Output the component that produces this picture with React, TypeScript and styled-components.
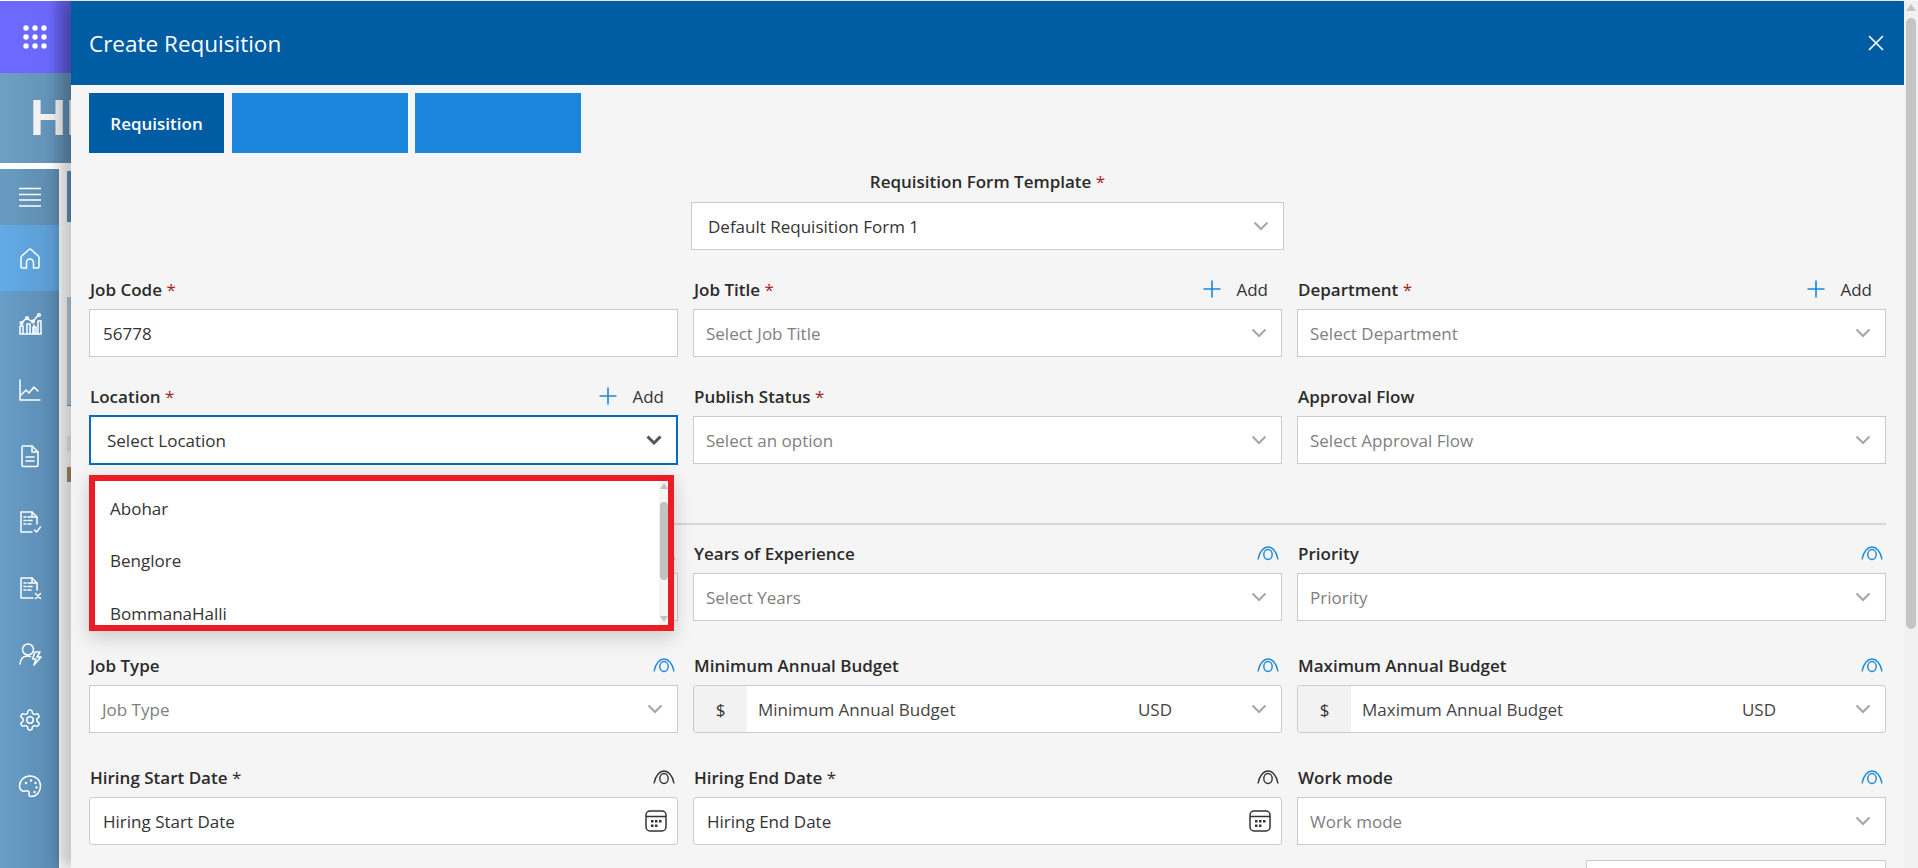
import styled, { createGlobalStyle } from 'styled-components';
import { ReactNode } from 'react';

const GlobalStyle = createGlobalStyle`
  html, body {
    margin: 0;
    padding: 0;
    height: 100%;
    overflow: hidden;
    background: #fff;
    font-family: 'Open Sans', 'Noto Sans', sans-serif;
  }
  * { box-sizing: border-box; }
`;

const Page = styled.div`
  position: relative;
  width: 1918px;
  height: 868px;
  overflow: hidden;
  padding-top: 1px;
`;

const TopBar = styled.div`
  height: 72px;
  width: 71px;
  background: linear-gradient(90deg, #6d69ff, #6c68fc 70%, #5a57d6);
  display: flex;
  align-items: center;
  justify-content: flex-end;
  padding-right: 24px;
`;

const Banner = styled.div`
  height: 90px;
  background: linear-gradient(90deg, #6ea0c4, #5f8eb3 71px);
  font-family: 'Liberation Sans', sans-serif;
  font-size: 50px;
  font-weight: 700;
  color: #f2f2f2;
  line-height: 90px;
  padding-left: 30px;
  white-space: nowrap;
`;

const Body = styled.div`
  margin-top: 6px;
  display: flex;
  height: 699px;
`;

const Sidebar = styled.nav`
  width: 59px;
  flex: none;
  background: linear-gradient(90deg, #699fca, #5a8ab0);
  color: #fff;
`;

const MenuRow = styled.div`
  height: 56px;
  display: flex;
  align-items: center;
  justify-content: center;
  background: linear-gradient(90deg, #6a9cc2, #5c8aad);
`;

const NavRow = styled.div<{ $active?: boolean }>`
  height: 66px;
  display: flex;
  align-items: center;
  justify-content: center;
  background: ${(p) => (p.$active ? 'linear-gradient(90deg, #63abe8, #5b9bd0)' : 'transparent')};
`;

const Behind = styled.div`
  flex: 1;
  background: #fff;
  padding: 2px 0 0 8px;
  display: flex;
  flex-direction: column;
`;

const BehindBar = styled.div`
  width: 40px;
  height: 51px;
  background: #5c8fbb;
`;

const BehindCard = styled.div`
  width: 40px;
  height: 109px;
  margin-top: 75px;
  background: #b9ccdc;
  border-bottom: 1px solid #5c8fbb;
`;

const BehindChip = styled.div`
  width: 40px;
  height: 15px;
  margin-top: 30px;
  background: #ececec;
`;

const BehindMark = styled.div`
  width: 40px;
  height: 15px;
  margin-top: 16px;
  background: #a58a62;
`;

const Modal = styled.section`
  position: absolute;
  top: 1px;
  left: 71px;
  width: 1847px;
  height: 867px;
  background: #f5f5f5;
  box-shadow: -12px 0 14px rgba(0, 0, 0, 0.22);
  overflow: hidden;
  display: flex;
`;

const ModalMain = styled.div`
  width: 1833px;
  flex: none;
`;

const ModalHeader = styled.header`
  height: 84px;
  background: #005ca3;
  color: #fff;
  display: flex;
  align-items: center;
  justify-content: space-between;
  padding: 0 19px 0 18px;
`;

const ModalTitle = styled.h1`
  margin: 0;
  font-size: 22.5px;
  font-weight: 400;
`;

const Close = styled.button`
  border: none;
  background: none;
  padding: 0;
  display: flex;
  color: #fff;
`;

const ScrollTrack = styled.div`
  width: 14px;
  flex: none;
  background: #f1f1f1;
  padding: 3px 2px 0;
  display: flex;
  flex-direction: column;
  align-items: center;
`;

const ScrollArrowUp = styled.div`
  width: 0;
  height: 0;
  border-left: 5px solid transparent;
  border-right: 5px solid transparent;
  border-bottom: 7px solid #c6c6c6;
`;

const ScrollThumb = styled.div`
  width: 10px;
  height: 611px;
  margin-top: 7px;
  border-radius: 5px;
  background: #c4c4c4;
`;

const Tabs = styled.div`
  display: flex;
  padding: 8px 18px 0;
`;

const Tab = styled.div<{ $active?: boolean; $width: number; $gap: number }>`
  height: 60px;
  width: ${(p) => p.$width}px;
  margin-right: ${(p) => p.$gap}px;
  background: ${(p) => (p.$active ? '#005ca3' : '#1b86db')};
  color: #fff;
  font-size: 17px;
  font-weight: 600;
  display: flex;
  align-items: center;
  justify-content: center;
`;

const Form = styled.div`
  padding: 0 18px;
`;

const TemplateBlock = styled.div`
  width: 593px;
  margin: 17px auto 0 602px;
  display: flex;
  flex-direction: column;
  align-items: center;
`;

const TemplateLabel = styled.div`
  height: 24px;
  line-height: 24px;
  margin-bottom: 8px;
  font-size: 17px;
  font-weight: 600;
  color: #2b2b2b;
`;

const Grid = styled.div<{ $top: number; $rowGap: number }>`
  display: grid;
  grid-template-columns: repeat(3, 589px);
  column-gap: 15px;
  row-gap: ${(p) => p.$rowGap}px;
  margin-top: ${(p) => p.$top}px;
`;

const Field = styled.div`
  position: relative;
`;

const FieldHead = styled.div`
  height: 24px;
  margin-bottom: 8px;
  display: flex;
  align-items: center;
  justify-content: space-between;
  padding-right: 14px;
`;

const EyeHead = styled(FieldHead)`
  padding-right: 3px;
`;

const Label = styled.label`
  font-size: 17px;
  font-weight: 600;
  color: #2b2b2b;
  padding-left: 1px;
`;

const Star = styled.span<{ $plain?: boolean }>`
  color: ${(p) => (p.$plain ? '#2b2b2b' : '#a31e22')};
  font-weight: 400;
`;

const AddLink = styled.span`
  display: flex;
  align-items: center;
  gap: 15px;
  font-size: 17px;
  color: #333;
`;

const Control = styled.div<{ $focus?: boolean; $round?: boolean }>`
  height: ${(p) => (p.$focus ? 50 : 48)}px;
  margin-top: ${(p) => (p.$focus ? -1 : 0)}px;
  background: #fff;
  border: ${(p) => (p.$focus ? '2px solid #0a6ab5' : '1px solid #cbcbcb')};
  border-radius: ${(p) => (p.$round ? 3 : 0)}px;
  display: flex;
  align-items: center;
  justify-content: space-between;
  font-size: 17px;
  overflow: hidden;
`;

const ControlText = styled.span<{ $muted?: boolean; $inset: number }>`
  padding-left: ${(p) => p.$inset}px;
  color: ${(p) => (p.$muted ? '#808080' : '#333')};
`;

const Chevron = styled.svg<{ $dark?: boolean }>`
  width: 16px;
  height: 10px;
  margin-right: 14px;
  flex: none;
  fill: none;
  stroke: ${(p) => (p.$dark ? '#555' : '#a6a6a6')};
  stroke-width: ${(p) => (p.$dark ? 3 : 2)};
`;

const Addon = styled.span`
  width: 53px;
  align-self: stretch;
  flex: none;
  background: #f2f2f2;
  color: #333;
  display: flex;
  align-items: center;
  justify-content: center;
`;

const BudgetText = styled.span`
  flex: 1;
  padding-left: 11px;
  color: #444;
`;

const Currency = styled.span`
  color: #444;
  margin-right: 79px;
`;

const Divider = styled.div`
  height: 2px;
  margin-top: 58px;
  background: #d6d6d6;
`;

const Dropdown = styled.div`
  position: absolute;
  top: 59px;
  left: 0;
  width: 585px;
  height: 156px;
  z-index: 3;
  background: #fff;
  border: 6px solid #ed1c24;
  box-shadow: 0 6px 18px rgba(0, 0, 0, 0.18);
  overflow: hidden;
  display: flex;
`;

const Options = styled.ul`
  list-style: none;
  margin: 0;
  padding: 0 0 0 15px;
  flex: 1;
  font-size: 17px;
  color: #333;
`;

const Option = styled.li`
  height: 52.5px;
  display: flex;
  align-items: center;
  position: relative;
  top: 1px;
`;

const DropScroll = styled.div`
  width: 9px;
  margin-right: 0;
  flex: none;
  display: flex;
  flex-direction: column;
  align-items: center;
  background: #f4f4f4;
`;

const DropThumb = styled.div`
  width: 8px;
  height: 78px;
  margin-top: 13px;
  border-radius: 4px;
  background: #c2c2c2;
`;

const DropArrow = styled.div<{ $down?: boolean }>`
  width: 0;
  height: 0;
  margin-top: ${(p) => (p.$down ? 'auto' : '2px')};
  margin-bottom: ${(p) => (p.$down ? '3px' : '0')};
  border-left: 4px solid transparent;
  border-right: 4px solid transparent;
  ${(p) => (p.$down ? 'border-top: 6px solid #c2c2c2;' : 'border-bottom: 6px solid #c2c2c2;')}
`;

const NextRow = styled.div`
  height: 40px;
  width: 300px;
  margin: 15px 0 0 auto;
  background: #fff;
  border: 1px solid #cbcbcb;
`;

const ChevronIcon = ({ dark }: { dark?: boolean }) => (
  <Chevron $dark={dark} viewBox="0 0 16 10">
    <path d="M1.5 1.5 8 8l6.5-6.5" />
  </Chevron>
);

const PlusIcon = () => (
  <svg width="18" height="18" viewBox="0 0 18 18" fill="none" stroke="#1b86db" strokeWidth="1.6">
    <path d="M9 0.5v17M0.5 9h17" />
  </svg>
);

const EyeIcon = ({ dark }: { dark?: boolean }) => (
  <svg width="22" height="15" viewBox="0 0 22 15" fill="none" stroke={dark ? '#333' : '#1b86db'} strokeWidth="1.4">
    <path d="M1 13.5C2.5 5 7 1 11 1s8.500 4 10 12.500" />
    <ellipse cx="11" cy="8.500" rx="4.200" ry="5" />
  </svg>
);

const CalendarIcon = () => (
  <svg width="22" height="22" viewBox="0 0 22 22" fill="none" stroke="#333" strokeWidth="1.5" style={{ marginRight: 10 }}>
    <rect x="1" y="1" width="20" height="20" rx="4" />
    <path d="M1 6.500h20" />
    <g fill="#333" stroke="none">
      <rect x="6" y="10" width="2.500" height="2.500" />
      <rect x="10" y="10" width="2.500" height="2.500" />
      <rect x="14" y="10" width="2.500" height="2.500" />
      <rect x="6" y="14.500" width="2.500" height="2.500" />
      <rect x="10" y="14.500" width="2.500" height="2.500" />
    </g>
  </svg>
);

const GridDots = () => (
  <svg width="24" height="24" viewBox="0 0 24 24" fill="#fff">
    {[3, 12, 21].flatMap((y) => [3, 12, 21].map((x) => <circle key={`${x}-${y}`} cx={x} cy={y} r="2.700" />))}
  </svg>
);

const NavSvg = ({ children }: { children: ReactNode }) => (
  <svg width="24" height="24" viewBox="0 0 24 24" fill="none" stroke="#fff" strokeWidth="1.500" strokeLinecap="round" strokeLinejoin="round">
    {children}
  </svg>
);

const navIcons: ReactNode[] = [
  <path key="h" d="M3 21V11.500a2 2 0 0 1 .7-1.500L11 3.500a1.500 1.500 0 0 1 2 0l7.300 6.500a2 2 0 0 1 .7 1.500V21a1 1 0 0 1-1 1h-4.500v-5.500a3.500 3.500 0 0 0-7 0V22H4a1 1 0 0 1-1-1z" />,
  <g key="a">
    <path d="M2 22v-8h3v8zM9 22V12h3v10zM16 22v-9h0M15 22v-7h3v7zM20 22V9h3v13zM2 22h21" />
    <path d="M3.500 11 8.500 6l6 4 5-6" />
    <circle cx="3.500" cy="11" r="1.300" />
    <circle cx="9" cy="6" r="1.300" />
    <circle cx="15" cy="9.500" r="1.300" />
    <circle cx="21" cy="3" r="1.300" />
  </g>,
  <path key="l" d="M2 2v20h20M3 17l5-5 3 3 5-6 4 4" />,
  <g key="d">
    <path d="M5 2h9l6 6v13a1.500 1.500 0 0 1-1.500 1.500h-13A1.500 1.500 0 0 1 4 21V3a1 1 0 0 1 1-1z" />
    <path d="M14 2v6h6M8 13h8M8 17h8" />
  </g>,
  <g key="c">
    <path d="M19 14V7l-5-5H3v20h11" />
    <path d="M14 2v5h5M6 7h2M10 7h3M6 10.500h2M10 10.500h4M6 14h2M10 14h3M16.500 20l2 2 4-5" />
  </g>,
  <g key="x">
    <path d="M19 14V7l-5-5H3v20h12" />
    <path d="M14 2v5h5M6 7h2M10 7h3M6 10.500h2M10 10.500h4M6 14h2M10 14h3M17.500 17.500l5 5M22.500 17.500l-5 5" />
  </g>,
  <g key="u">
    <circle cx="10" cy="7.500" r="5.500" />
    <path d="M2 22c.5-5 3.500-8 7.500-8 1 0 2 .2 3 .6M17 10h5l-3 5h4l-7 8 2-6h-3.500z" />
  </g>,
  <g key="s">
    <path d="M12.200 2h-.4a2 2 0 0 0-2 2v.2a2 2 0 0 1-1 1.700l-.4.300a2 2 0 0 1-2 0l-.2-.1a2 2 0 0 0-2.700.7l-.2.400a2 2 0 0 0 .7 2.700l.2.100a2 2 0 0 1 1 1.700v.6a2 2 0 0 1-1 1.700l-.2.100a2 2 0 0 0-.7 2.700l.2.400a2 2 0 0 0 2.700.7l.2-.1a2 2 0 0 1 2 0l.4.300a2 2 0 0 1 1 1.700v.2a2 2 0 0 0 2 2h.4a2 2 0 0 0 2-2v-.2a2 2 0 0 1 1-1.700l.4-.3a2 2 0 0 1 2 0l.2.100a2 2 0 0 0 2.700-.7l.2-.4a2 2 0 0 0-.7-2.700l-.2-.1a2 2 0 0 1-1-1.700v-.6a2 2 0 0 1 1-1.700l.2-.1a2 2 0 0 0 .7-2.700l-.2-.4a2 2 0 0 0-2.700-.7l-.2.100a2 2 0 0 1-2 0l-.4-.3a2 2 0 0 1-1-1.700V4a2 2 0 0 0-2-2z" />
    <circle cx="12" cy="12" r="3.200" />
  </g>,
  <g key="p">
    <path d="M12 2C6 2 1.500 6.500 1.500 12c0 4 3 6 6 5 2.500-.8 4.500.5 3.500 3-.5 1.500.5 2.500 2 2.500 5.500 0 9.500-4.500 9.500-10.500S18 2 12 2z" />
    <g fill="#fff" stroke="none">
      <circle cx="8" cy="9" r="1.200" />
      <circle cx="13" cy="6.500" r="1.200" />
      <circle cx="17.500" cy="9" r="1.200" />
      <circle cx="18.500" cy="13.500" r="1.200" />
      <circle cx="16.500" cy="18" r="1.200" />
    </g>
  </g>,
];

type HeadProps = { label: string; star?: 'red' | 'plain'; };

const LabelText = ({ label, star }: HeadProps) => (
  <Label>
    {label}
    {star && <Star $plain={star === 'plain'}> *</Star>}
  </Label>
);

const AddHead = (props: HeadProps) => (
  <FieldHead>
    <LabelText {...props} />
    <AddLink>
      <PlusIcon />
      Add
    </AddLink>
  </FieldHead>
);

const VisHead = ({ dark, ...props }: HeadProps & { dark?: boolean }) => (
  <EyeHead>
    <LabelText {...props} />
    <EyeIcon dark={dark} />
  </EyeHead>
);

const SelectBox = ({ text }: { text: string }) => (
  <Control>
    <ControlText $muted $inset={12}>{text}</ControlText>
    <ChevronIcon />
  </Control>
);

const BudgetBox = ({ text }: { text: string }) => (
  <Control $round>
    <Addon>$</Addon>
    <BudgetText>{text}</BudgetText>
    <Currency>USD</Currency>
    <ChevronIcon />
  </Control>
);

const DateBox = ({ text }: { text: string }) => (
  <Control $round>
    <ControlText $inset={13}>{text}</ControlText>
    <CalendarIcon />
  </Control>
);

export default function App() {
  return (
    <>
      <GlobalStyle />
      <Page>
        <TopBar>
          <GridDots />
        </TopBar>
        <Banner>HI</Banner>
        <Body>
          <Sidebar>
            <MenuRow>
              <svg width="22" height="20" viewBox="0 0 22 20" stroke="#fff" strokeWidth="1.300">
                <path d="M0 1.500h22M0 7.500h22M0 13h22M0 19h22" />
              </svg>
            </MenuRow>
            {navIcons.map((icon, i) => (
              <NavRow key={i} $active={i === 0}>
                <NavSvg>{icon}</NavSvg>
              </NavRow>
            ))}
          </Sidebar>
          <Behind>
            <BehindBar />
            <BehindCard />
            <BehindChip />
            <BehindMark />
          </Behind>
        </Body>
        <Modal>
          <ModalMain>
            <ModalHeader>
              <ModalTitle>Create Requisition</ModalTitle>
              <Close aria-label="Close">
                <svg width="18" height="18" viewBox="0 0 18 18" fill="none" stroke="#fff" strokeWidth="1.600">
                  <path d="M2 2l14 14M16 2 2 16" />
                </svg>
              </Close>
            </ModalHeader>
            <Tabs>
              <Tab $active $width={135} $gap={8}>Requisition</Tab>
              <Tab $width={176} $gap={7} />
              <Tab $width={166} $gap={0} />
            </Tabs>
            <Form>
              <TemplateBlock>
                <TemplateLabel>
                  Requisition Form Template<Star> *</Star>
                </TemplateLabel>
                <Control style={{ width: '100%' }}>
                  <ControlText $inset={16}>Default Requisition Form 1</ControlText>
                  <ChevronIcon />
                </Control>
              </TemplateBlock>
              <Grid $top={27} $rowGap={27}>
                <Field>
                  <FieldHead><LabelText label="Job Code" star="red" /></FieldHead>
                  <Control>
                    <ControlText $inset={13}>56778</ControlText>
                  </Control>
                </Field>
                <Field>
                  <AddHead label="Job Title" star="red" />
                  <SelectBox text="Select Job Title" />
                </Field>
                <Field>
                  <AddHead label="Department" star="red" />
                  <SelectBox text="Select Department" />
                </Field>
                <Field>
                  <AddHead label="Location" star="red" />
                  <Control $focus>
                    <ControlText $inset={16}>Select Location</ControlText>
                    <ChevronIcon dark />
                  </Control>
                  <Dropdown style={{ top: 91 }}>
                    <Options>
                      <Option>Abohar</Option>
                      <Option>Benglore</Option>
                      <Option>BommanaHalli</Option>
                    </Options>
                    <DropScroll>
                      <DropArrow />
                      <DropThumb />
                      <DropArrow $down />
                    </DropScroll>
                  </Dropdown>
                </Field>
                <Field>
                  <FieldHead><LabelText label="Publish Status" star="red" /></FieldHead>
                  <SelectBox text="Select an option" />
                </Field>
                <Field>
                  <FieldHead><LabelText label="Approval Flow" /></FieldHead>
                  <SelectBox text="Select Approval Flow" />
                </Field>
              </Grid>
              <Divider />
              <Grid $top={16} $rowGap={32}>
                <Field>
                  <VisHead label="Experience" />
                  <SelectBox text="" />
                </Field>
                <Field>
                  <VisHead label="Years of Experience" />
                  <SelectBox text="Select Years" />
                </Field>
                <Field>
                  <VisHead label="Priority" />
                  <SelectBox text="Priority" />
                </Field>
                <Field>
                  <VisHead label="Job Type" />
                  <SelectBox text="Job Type" />
                </Field>
                <Field>
                  <VisHead label="Minimum Annual Budget" />
                  <BudgetBox text="Minimum Annual Budget" />
                </Field>
                <Field>
                  <VisHead label="Maximum Annual Budget" />
                  <BudgetBox text="Maximum Annual Budget" />
                </Field>
                <Field>
                  <VisHead label="Hiring Start Date" star="plain" dark />
                  <DateBox text="Hiring Start Date" />
                </Field>
                <Field>
                  <VisHead label="Hiring End Date" star="plain" dark />
                  <DateBox text="Hiring End Date" />
                </Field>
                <Field>
                  <VisHead label="Work mode" />
                  <SelectBox text="Work mode" />
                </Field>
              </Grid>
              <NextRow />
            </Form>
          </ModalMain>
          <ScrollTrack>
            <ScrollArrowUp />
            <ScrollThumb />
          </ScrollTrack>
        </Modal>
      </Page>
    </>
  );
}
